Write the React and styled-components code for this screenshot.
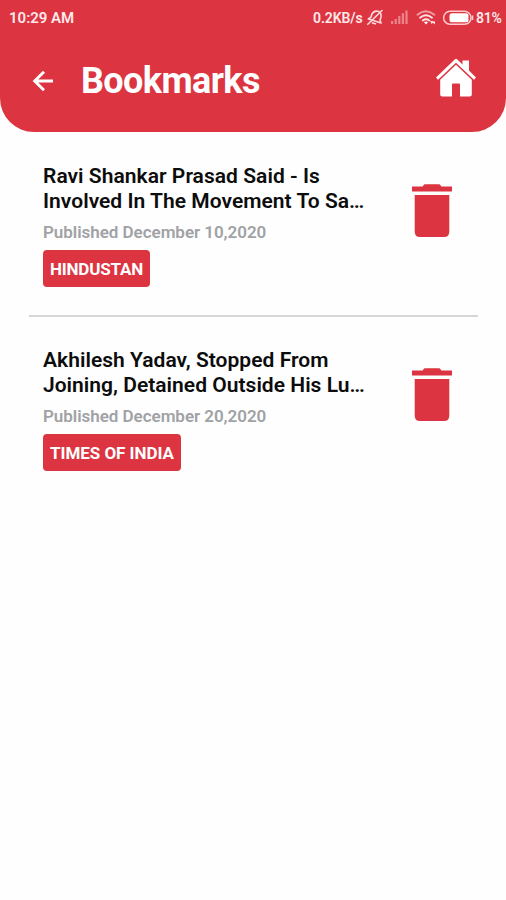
import React from 'react';
import styled, { createGlobalStyle } from 'styled-components';

const RED = '#dc3541';

const GlobalStyle = createGlobalStyle`
  * { box-sizing: border-box; }
  body {
    margin: 0;
    background: #fefefe;
    font-family: Roboto, "Liberation Sans", sans-serif;
  }
`;

const Screen = styled.main`
  width: 506px;
  height: 900px;
  overflow: hidden;
  background: #fefefe;
`;

const Header = styled.header`
  height: 132px;
  background: ${RED};
  border-radius: 0 0 34px 34px;
  color: #fff;
`;

const StatusBar = styled.div`
  height: 36px;
  display: flex;
  align-items: center;
  padding: 0 2px 0 9px;
  font-weight: 600;
  color: #ffe9ea;
`;

const StatusText = styled.span`
  white-space: nowrap;
  width: ${(p) => p.$width}px;
  margin-right: ${(p) => p.$gap || '0'};
  letter-spacing: ${(p) => p.$tracking || 0}px;
  font-size: ${(p) => p.$size || 14}px;
  line-height: 16px;
`;

const StatusIcons = styled.svg`
  flex: none;
  display: block;
`;

const TitleBar = styled.div`
  height: 90px;
  display: flex;
  align-items: center;
  padding: 0 29px 0 31px;
`;

const IconButton = styled.button`
  flex: none;
  border: 0;
  padding: 0;
  background: none;
  color: inherit;
  display: flex;
  cursor: pointer;
`;

const HomeButton = styled(IconButton)`
  margin-bottom: 6px;
`;

const PageTitle = styled.h1`
  flex: 1;
  margin: 0 0 0 26px;
  font-size: 36px;
  line-height: 44px;
  font-weight: 700;
  letter-spacing: -0.6px;
`;

const List = styled.ul`
  list-style: none;
  margin: 0;
  padding: 1px 28px 0 29px;
`;

const Item = styled.li`
  height: 184px;
  display: flex;
  align-items: flex-start;
  justify-content: space-between;
  padding: 31px 25px 0 14px;
  border-bottom: ${(p) => (p.$divider ? '2px solid #d4d6d8' : '0')};
`;

const Article = styled.article`
  display: flex;
  flex-direction: column;
  align-items: flex-start;
`;

const Headline = styled.h2`
  margin: 0;
  font-size: 21px;
  line-height: 25px;
  font-weight: 600;
  color: #0c0c0c;
  white-space: nowrap;
`;

const HeadlineLine = styled.span`
  display: block;
  letter-spacing: ${(p) => p.$tracking}px;
`;

const Published = styled.p`
  margin: 8px 0 0;
  font-size: 17px;
  line-height: 20px;
  font-weight: 600;
  letter-spacing: -0.04px;
  color: #a0a2a5;
  white-space: nowrap;
`;

const Source = styled.span`
  height: 37px;
  margin-top: 8px;
  padding: 0 7px;
  border-radius: 4px;
  background: ${RED};
  color: #fff;
  font-size: 17px;
  line-height: 39px;
  font-weight: 700;
  letter-spacing: ${(p) => p.$tracking}px;
  white-space: nowrap;
`;

const DeleteButton = styled(IconButton)`
  margin-top: 19px;
  color: ${RED};
`;

const BackIcon = () => (
  <svg width="24" height="24" viewBox="0 0 24 24" fill="none" stroke="currentColor" strokeWidth="2.9">
    <path d="M22 12H4M13 2.7L3.7 12L13 21.3" />
  </svg>
);

const HomeIcon = () => (
  <svg width="42" height="40" viewBox="0 0 42 40" fill="currentColor">
    <path d="M1 19.5L20 1.2Q21 .3 22 1.2L27.5 6.4V2.5H34V12.5L41 19.5L39 21.8L21 4.8L3 21.8Z" />
    <path d="M5.2 21.7L21 6.7L36.8 21.7V36.5Q36.8 38.5 34.8 38.5H25V26.5Q25 25.5 24 25.5H18Q17 25.5 17 26.5V38.5H7.2Q5.2 38.5 5.2 36.5Z" />
  </svg>
);

const TrashIcon = () => (
  <svg width="42" height="55" viewBox="0 0 42 55" fill="currentColor">
    <path d="M1 3.5H11.5L13.5 1.2H28.5L30.5 3.5H41V8.5H1Z" />
    <path d="M3.7 12H38.3V48.5Q38.3 54 32.8 54H9.2Q3.7 54 3.7 48.5Z" />
  </svg>
);

const StatusGlyphs = () => (
  <StatusIcons width="110" height="20" viewBox="366 8 110 20" fill="none">
    <g stroke="#ffdadd" strokeWidth="1.6" strokeLinecap="round" strokeLinejoin="round">
      <g transform="rotate(18 376 17)">
        <path d="M369.3 21.2L371.2 18.8V15.4Q372 11.2 376 11Q380 11.2 380.8 15.4V18.8L382.7 21.2Z" />
        <path d="M374.5 23.7H377.5" />
      </g>
      <path d="M367.8 24.3L382 10.5" />
    </g>
    <g fill="#e9858b">
      <rect x="391" y="21" width="2.2" height="3" />
      <rect x="394.6" y="19" width="2.2" height="5" />
      <rect x="398.2" y="16" width="2.2" height="8" />
      <rect x="401.8" y="13.2" width="2.2" height="10.8" />
      <rect x="405.4" y="10.5" width="2.2" height="13.5" />
    </g>
    <g strokeWidth="1.9" strokeLinecap="round">
      <path d="M417.5 14.7Q425.8 8 434.3 14.7" stroke="#ef9da1" />
      <path d="M420 17.7Q426 13 432 17.7" stroke="#ffe3e5" />
      <path d="M422.8 20.4Q426 18 429.2 20.4" stroke="#ffe3e5" />
    </g>
    <path d="M424 22.2Q426 21 428 22.2L426 24.4Z" fill="#fff" />
    <path d="M430 20.8L431.6 24L433 22.8L435 24.5V21.4Z" fill="#ffe3e5" />
    <rect x="443.6" y="11.3" width="27.4" height="13" rx="6.5" stroke="#ffc9cd" strokeWidth="1.5" />
    <rect x="449.5" y="13.3" width="19" height="9" rx="2.5" fill="#fff" />
    <path d="M472.5 15.5V20" stroke="#ffc9cd" strokeWidth="1.6" />
  </StatusIcons>
);

const bookmarks = [
  {
    lines: [
      { text: 'Ravi Shankar Prasad Said - Is', tracking: 0.04 },
      { text: 'Involved In The Movement To Sa…', tracking: 0.03 },
    ],
    date: 'December 10,2020',
    source: 'HINDUSTAN',
    sourceTracking: -0.2,
  },
  {
    lines: [
      { text: 'Akhilesh Yadav, Stopped From', tracking: 0.03 },
      { text: 'Joining, Detained Outside His Lu…', tracking: 0.02 },
    ],
    date: 'December 20,2020',
    source: 'TIMES OF INDIA',
    sourceTracking: -0.04,
  },
];

export default function App() {
  return (
    <>
      <GlobalStyle />
      <Screen>
        <Header>
          <StatusBar>
            <StatusText $width={70} $gap="auto" $size={15}>10:29 AM</StatusText>
            <StatusText $width={53} $size={14} $tracking={-0.1}>0.2KB/s</StatusText>
            <StatusGlyphs />
            <StatusText $width={28} $tracking={-0.2}>81%</StatusText>
          </StatusBar>
          <TitleBar>
            <IconButton aria-label="Back"><BackIcon /></IconButton>
            <PageTitle>Bookmarks</PageTitle>
            <HomeButton aria-label="Home"><HomeIcon /></HomeButton>
          </TitleBar>
        </Header>
        <List>
          {bookmarks.map((item, index) => (
            <Item key={item.source} $divider={index < bookmarks.length - 1}>
              <Article>
                <Headline>
                  {item.lines.map((line) => (
                    <HeadlineLine key={line.text} $tracking={line.tracking}>{line.text}</HeadlineLine>
                  ))}
                </Headline>
                <Published>Published {item.date}</Published>
                <Source $tracking={item.sourceTracking}>{item.source}</Source>
              </Article>
              <DeleteButton aria-label="Delete bookmark"><TrashIcon /></DeleteButton>
            </Item>
          ))}
        </List>
      </Screen>
    </>
  );
}
